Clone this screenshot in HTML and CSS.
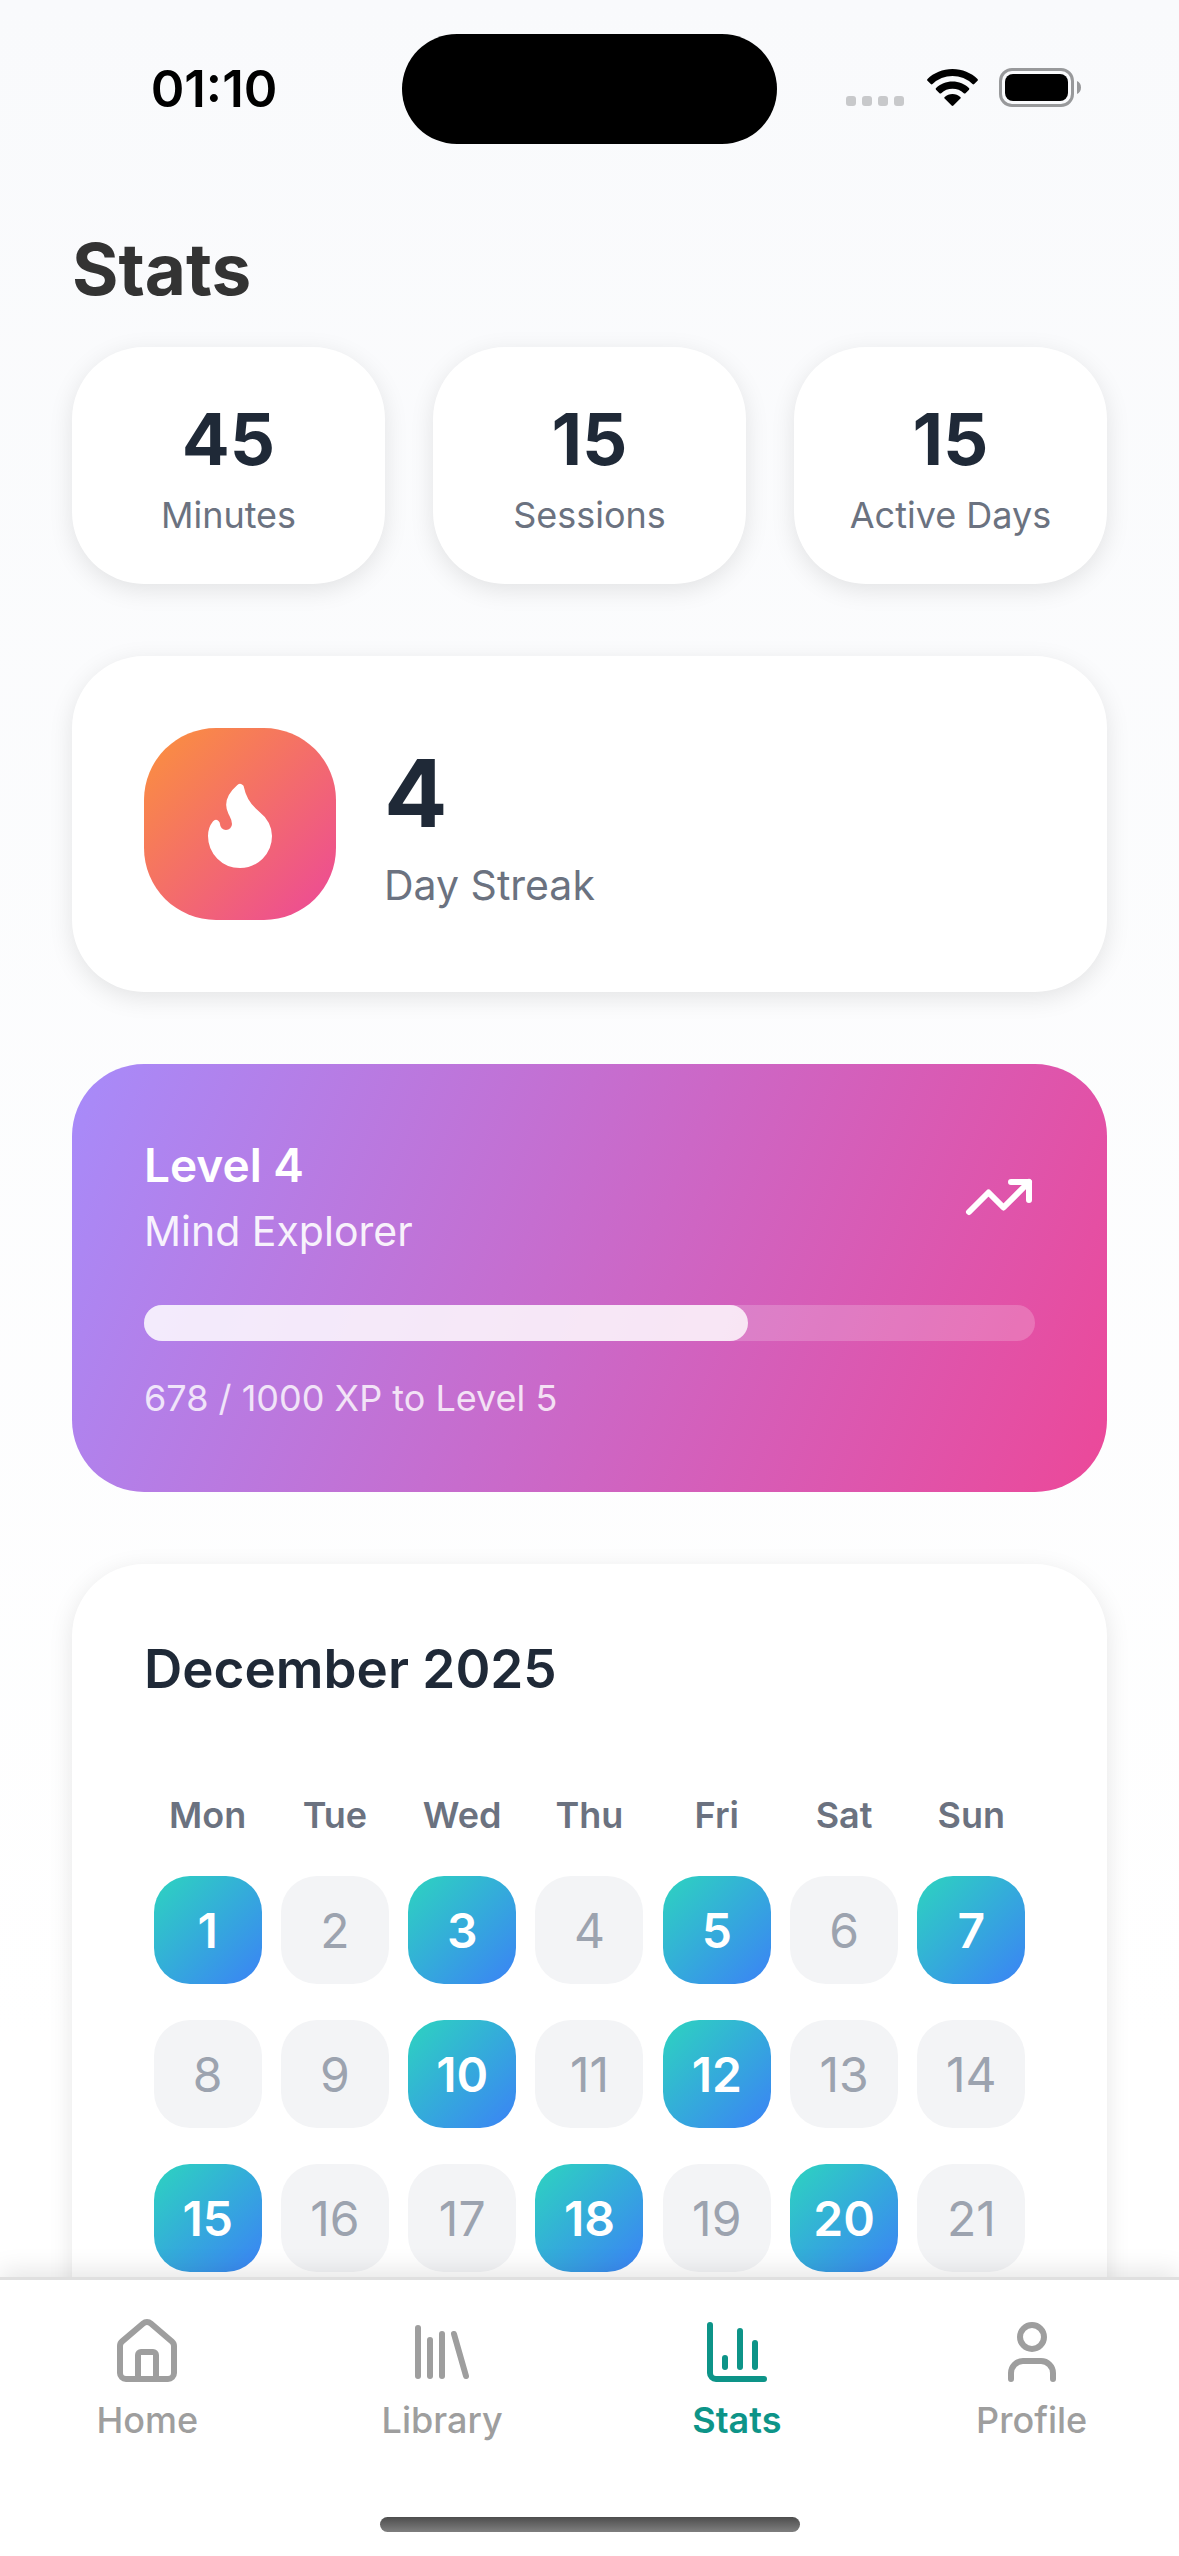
FILE: index.html
```html
<!DOCTYPE html>
<html lang="en">
<head>
<meta charset="utf-8">
<meta name="viewport" content="width=device-width, initial-scale=1">
<title>Stats</title>
<link rel="stylesheet" href="styles.css">
</head>
<body>
<div class="app">
  <header class="status-bar">
    <time class="clock">01:10</time>
    <div class="island"></div>
    <div class="indicators">
      <svg class="signal" viewBox="0 0 60 10" aria-hidden="true">
        <rect x="0" y="0" width="10" height="10" rx="3"/>
        <rect x="16" y="0" width="10" height="10" rx="3"/>
        <rect x="32" y="0" width="10" height="10" rx="3"/>
        <rect x="48" y="0" width="10" height="10" rx="3"/>
      </svg>
      <svg class="wifi" viewBox="0 0 51 37" aria-hidden="true">
        <path d="M25.500 0C35.300 0 44.300 3.800 50.500 10.100Q51.300 11 50.500 11.800L47.200 15.100Q46.300 15.900 45.500 15.100A28.500 28.500 0 0 0 5.500 15.100Q4.700 15.900 3.800 15.100L.5 11.800Q-.3 11 .5 10.100C6.700 3.800 15.700 0 25.500 0Z"/>
        <path d="M25.500 12.500C31.900 12.500 37.700 15 41.900 19Q42.800 19.900 42 20.700L38.500 24.200Q37.700 25 36.800 24.200A16.500 16.500 0 0 0 14.200 24.200Q13.300 25 12.500 24.200L9 20.700Q8.200 19.900 9.100 19C13.300 15 19.100 12.500 25.500 12.500Z"/>
        <path d="M25.500 25C28.500 25 31.200 26.100 33.300 27.900Q34.200 28.700 33.400 29.500L26.400 36.500Q25.500 37.300 24.600 36.500L17.600 29.500Q16.800 28.700 17.700 27.900C19.800 26.100 22.500 25 25.500 25Z"/>
      </svg>
      <svg class="battery" viewBox="0 0 82 39" aria-hidden="true">
        <rect class="battery-shell" x="1.500" y="1.500" width="72" height="36" rx="11.500"/>
        <rect x="6" y="6" width="63" height="27" rx="8"/>
        <path class="battery-cap" d="M78 13C80.500 14 82 16.500 82 19.500S80.500 25 78 26Z"/>
      </svg>
    </div>
  </header>

  <main class="content">
    <h1 class="page-title">Stats</h1>

    <section class="totals">
      <div class="card total"><strong class="total-value">45</strong><span class="caption">Minutes</span></div>
      <div class="card total"><strong class="total-value">15</strong><span class="caption">Sessions</span></div>
      <div class="card total"><strong class="total-value">15</strong><span class="caption">Active Days</span></div>
    </section>

    <section class="card streak">
      <div class="streak-badge">
        <svg class="flame" viewBox="0 0 24 24" aria-hidden="true"><path d="M8.5 14.5A2.500 2.500 0 0 0 11 12c0-1.380-.5-2-1-3-1.072-2.143-.224-4.054 2-6 .5 2.500 2 4.900 4 6.500 2 1.600 3 3.500 3 5.500a7 7 0 1 1-14 0c0-1.153.433-2.294 1-3a2.500 2.500 0 0 0 2.500 2.500z"/></svg>
      </div>
      <div class="streak-text">
        <strong class="streak-value">4</strong>
        <span class="streak-label">Day Streak</span>
      </div>
    </section>

    <section class="level">
      <div class="level-head">
        <div>
          <h2 class="level-title">Level 4</h2>
          <p class="level-name">Mind Explorer</p>
        </div>
        <svg class="icon" viewBox="0 0 24 24" aria-hidden="true"><path d="M16 7h6v6"/><path d="m22 7-8.500 8.500-5-5L2 17"/></svg>
      </div>
      <div class="xp-track" role="progressbar" aria-label="XP" aria-valuemin="0" aria-valuemax="1000" aria-valuenow="678">
        <div class="xp-fill" style="width: 67.8%"></div>
      </div>
      <p class="xp-text">678 / 1000 XP to Level 5</p>
    </section>

    <section class="card month">
      <h2 class="month-title" id="month-title">December 2025</h2>
      <table class="calendar" aria-labelledby="month-title">
        <thead>
          <tr><th>Mon</th><th>Tue</th><th>Wed</th><th>Thu</th><th>Fri</th><th>Sat</th><th>Sun</th></tr>
        </thead>
        <tbody>
          <tr><td><span class="day active">1</span></td><td><span class="day">2</span></td><td><span class="day active">3</span></td><td><span class="day">4</span></td><td><span class="day active">5</span></td><td><span class="day">6</span></td><td><span class="day active">7</span></td></tr>
          <tr><td><span class="day">8</span></td><td><span class="day">9</span></td><td><span class="day active">10</span></td><td><span class="day">11</span></td><td><span class="day active">12</span></td><td><span class="day">13</span></td><td><span class="day">14</span></td></tr>
          <tr><td><span class="day active">15</span></td><td><span class="day">16</span></td><td><span class="day">17</span></td><td><span class="day active">18</span></td><td><span class="day">19</span></td><td><span class="day active">20</span></td><td><span class="day">21</span></td></tr>
        </tbody>
      </table>
    </section>
  </main>

  <nav class="tabs">
    <div class="tab-list">
      <a class="tab" href="#home">
        <svg class="icon" viewBox="0 0 24 24" aria-hidden="true"><path d="M15 21v-8a1 1 0 0 0-1-1h-4a1 1 0 0 0-1 1v8"/><path d="M3 10a2 2 0 0 1 .709-1.528l7-5.999a2 2 0 0 1 2.582 0l7 5.999A2 2 0 0 1 21 10v9a2 2 0 0 1-2 2H5a2 2 0 0 1-2-2z"/></svg>
        Home
      </a>
      <a class="tab" href="#library">
        <svg class="icon" viewBox="0 0 24 24" aria-hidden="true"><path d="m16 6 4 14"/><path d="M12 6v14"/><path d="M8 8v12"/><path d="M4 4v16"/></svg>
        Library
      </a>
      <a class="tab current" href="#stats" aria-current="page">
        <svg class="icon" viewBox="0 0 24 24" aria-hidden="true"><path d="M3 3v16a2 2 0 0 0 2 2h16"/><path d="M18 17V9"/><path d="M13 17V5"/><path d="M8 17v-3"/></svg>
        Stats
      </a>
      <a class="tab" href="#profile">
        <svg class="icon" viewBox="0 0 24 24" aria-hidden="true"><path d="M19 21v-2a4 4 0 0 0-4-4H9a4 4 0 0 0-4 4v2"/><circle cx="12" cy="7" r="4"/></svg>
        Profile
      </a>
    </div>
    <div class="home-indicator"></div>
  </nav>
</div>
</body>
</html>
```
FILE: styles.css
```css
* {
  box-sizing: border-box;
}

body {
  margin: 0;
  font-family: Inter, "Liberation Sans", sans-serif;
  color: #1f2937;
}

h1,
h2,
p {
  margin: 0;
}

.app {
  display: flex;
  flex-direction: column;
  height: 100vh;
  background: linear-gradient(#f9fafc, #ffffff 80%);
}

/* Status bar */

.status-bar {
  display: grid;
  grid-template-columns: 1fr 375px 1fr;
  flex: none;
  align-items: center;
  padding: 34px 0;
}

.clock {
  padding-left: 26px;
  text-align: center;
  font-size: 51px;
  font-weight: 600;
  line-height: 60px;
  color: #000000;
}

.island {
  height: 110px;
  border-radius: 55px;
  background: #000000;
}

.indicators {
  display: flex;
  align-items: center;
  justify-content: center;
  gap: 21px;
  padding: 0 30px 3px 0;
}

.signal {
  width: 60px;
  height: 10px;
  margin-top: 27px;
  fill: #c8c9cb;
}

.wifi {
  width: 51px;
  height: 37px;
}

.battery {
  width: 82px;
  height: 39px;
}

.battery-shell {
  fill: none;
  stroke: #98999b;
  stroke-width: 3;
}

.battery-cap {
  fill: #98999b;
}

/* Scrolling content */

.content {
  display: flex;
  flex: 1;
  flex-direction: column;
  gap: 72px;
  min-height: 0;
  padding: 49px 72px 0;
  overflow: hidden;
}

.content > * {
  flex: none;
}

.page-title {
  margin-bottom: -36px;
  font-size: 71px;
  font-weight: 700;
  line-height: 84px;
  color: #333333;
}

.card {
  border-radius: 72px;
  background: #ffffff;
  box-shadow: 0 6px 24px rgba(0, 0, 0, 0.1);
}

.totals {
  display: grid;
  grid-template-columns: repeat(3, 1fr);
  gap: 48px;
}

.total {
  display: flex;
  flex-direction: column;
  align-items: center;
  gap: 12px;
  padding: 50px 24px 46px;
}

.total-value {
  font-size: 71px;
  font-weight: 700;
  line-height: 84px;
}

.caption {
  font-size: 36px;
  line-height: 45px;
  color: #6b7280;
}

.streak {
  display: flex;
  align-items: center;
  gap: 48px;
  padding: 72px;
}

.streak-badge {
  display: flex;
  align-items: center;
  justify-content: center;
  width: 192px;
  height: 192px;
  border-radius: 72px;
  background: linear-gradient(135deg, #fb923c, #ec4899);
}

.flame {
  width: 96px;
  height: 96px;
  fill: #ffffff;
  stroke: #ffffff;
  stroke-width: 2;
  stroke-linecap: round;
  stroke-linejoin: round;
}

.streak-text {
  display: flex;
  flex-direction: column;
  gap: 8px;
}

.streak-value {
  font-size: 94px;
  font-weight: 700;
  line-height: 114px;
}

.streak-label {
  font-size: 41px;
  line-height: 54px;
  color: #6b7280;
}

.level {
  padding: 72px;
  border-radius: 72px;
  background: linear-gradient(113deg, #a78bfa, #ec4899);
  color: #ffffff;
}

.level-head {
  display: flex;
  align-items: center;
  justify-content: space-between;
}

.level-title {
  font-size: 46px;
  font-weight: 600;
  line-height: 58px;
}

.level-name {
  margin-top: 10px;
  font-size: 41px;
  line-height: 54px;
  opacity: 0.9;
}

.xp-track {
  height: 36px;
  margin-top: 47px;
  border-radius: 18px;
  background: rgba(255, 255, 255, 0.2);
}

.xp-fill {
  height: 100%;
  border-radius: 18px;
  background: rgba(255, 255, 255, 0.8);
}

.xp-text {
  margin-top: 36px;
  font-size: 36px;
  line-height: 43px;
  opacity: 0.8;
}

.month {
  padding: 72px 72px 156px;
}

.month-title {
  font-size: 53px;
  font-weight: 600;
  line-height: 66px;
}

.calendar {
  width: 100%;
  margin-top: 84px;
  border-spacing: 0;
  table-layout: fixed;
}

.calendar th {
  height: 72px;
  padding: 0 0 14px;
  font-size: 36px;
  font-weight: 600;
  line-height: 45px;
  color: #6b7280;
}

.calendar td {
  height: 144px;
  padding: 0;
}

.day {
  display: flex;
  align-items: center;
  justify-content: center;
  width: 108px;
  height: 108px;
  margin: 0 auto;
  border-radius: 36px;
  background: #f3f4f6;
  font-size: 48px;
  color: #9ca3af;
}

.day.active {
  background: linear-gradient(135deg, #2dd4bf, #3b82f6);
  font-weight: 600;
  color: #ffffff;
}

/* Tab bar */

.tabs {
  position: relative;
  display: flex;
  flex: none;
  flex-direction: column;
  align-items: center;
  gap: 74px;
  padding: 36px 0 24px;
  border-top: 3px solid #e0e0e0;
  background: #ffffff;
  box-shadow: 0 -6px 24px rgba(0, 0, 0, 0.1);
}

.tab-list {
  display: grid;
  grid-template-columns: repeat(4, 1fr);
  width: 100%;
}

.tab {
  display: flex;
  flex-direction: column;
  align-items: center;
  gap: 10px;
  font-size: 36px;
  font-weight: 500;
  line-height: 45px;
  text-decoration: none;
  color: #9e9e9e;
}

.tab.current {
  font-weight: 600;
  color: #0d9488;
}

.icon {
  width: 72px;
  height: 72px;
  fill: none;
  stroke: currentColor;
  stroke-width: 2;
  stroke-linecap: round;
  stroke-linejoin: round;
}

.home-indicator {
  width: 420px;
  height: 15px;
  border-radius: 8px;
  background: linear-gradient(#4d4d4d, #7f7f7f);
}
```
